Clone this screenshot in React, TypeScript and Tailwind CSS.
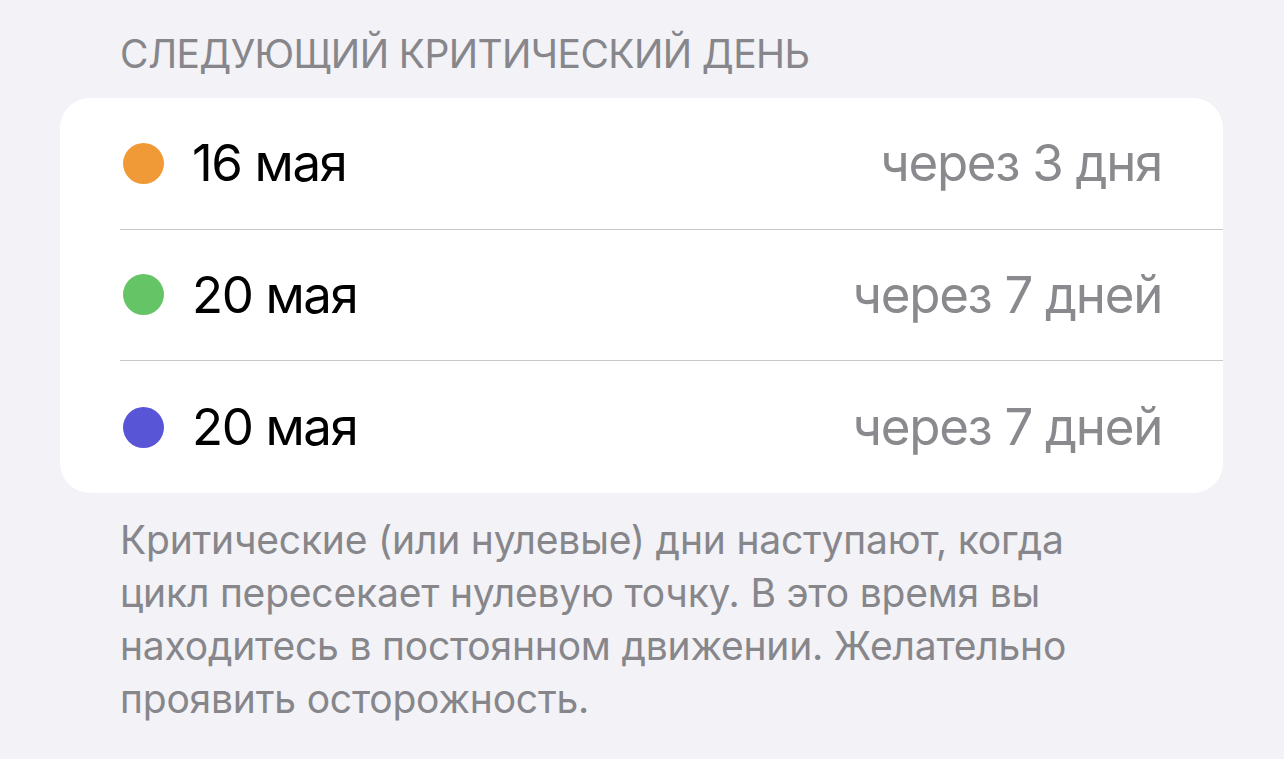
import React from "react";

const rows = [
  { color: "bg-[#f09a37]", date: "16 мая", when: "через 3 дня" },
  { color: "bg-[#65c466]", date: "20 мая", when: "через 7 дней" },
  { color: "bg-[#5856d6]", date: "20 мая", when: "через 7 дней" },
];

export default function App() {
  return (
    <div
      className="w-full h-[759px] bg-[#f2f2f7] px-[60px] pt-[34px] overflow-hidden"
      style={{ fontFamily: "Inter, 'Noto Sans', sans-serif" }}
    >
      <div className="pl-[60px] text-[39px] leading-[40px] text-[#86868b] tracking-[-0.6px]">
        СЛЕДУЮЩИЙ КРИТИЧЕСКИЙ ДЕНЬ
      </div>
      <div className="mt-[24px] w-[1163px] bg-white rounded-[30px] overflow-hidden">
        {rows.map((r, i) => (
          <div key={i} className="pl-[60px] h-[131.67px]">
            <div
              className={`h-full flex items-center pr-[61px] ${
                i < rows.length - 1 ? "border-b border-[#c8c8cc]" : ""
              }`}
            >
              <div className={`ml-[3px] w-[41px] h-[41px] rounded-full ${r.color}`} />
              <div className="ml-[28px] text-[51px] text-black tracking-[-1.4px]">{r.date}</div>
              <div className="ml-auto text-[51px] text-[#8a8a8e] tracking-[-1.3px]">{r.when}</div>
            </div>
          </div>
        ))}
      </div>
      <div className="mt-[20px] pl-[60px] w-[1163px] pr-[60px] text-[39px] leading-[53px] text-[#86868b] tracking-[-0.2px]">
        Критические (или нулевые) дни наступают, когда цикл пересекает нулевую точку. В это время вы находитесь в постоянном движении. Желательно проявить осторожность.
      </div>
    </div>
  );
}
